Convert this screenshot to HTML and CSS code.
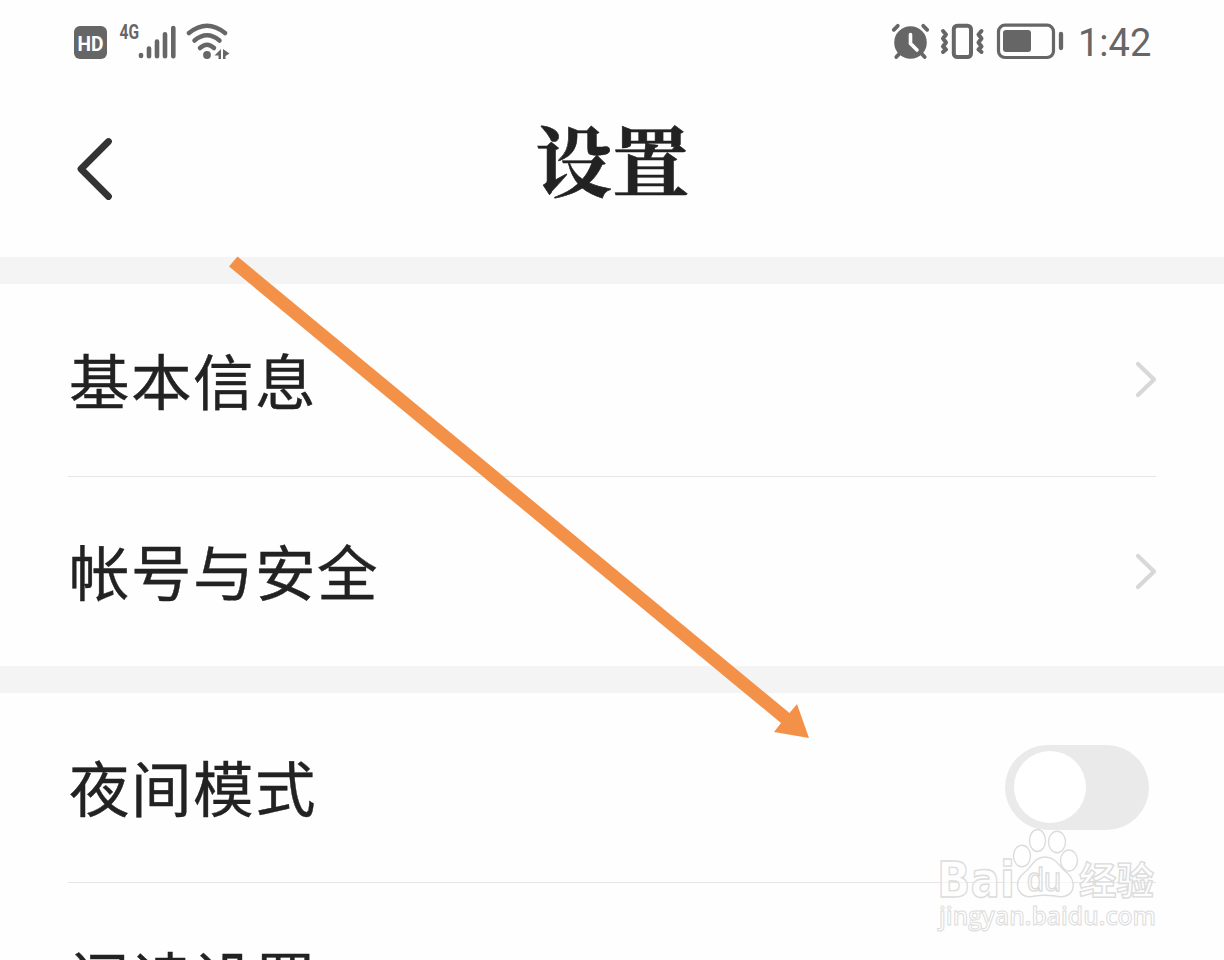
FILE: index.html
```html
<!DOCTYPE html>
<html lang="zh-CN">
<head>
    <meta charset="UTF-8">
    <meta name="viewport" content="width=device-width, initial-scale=1.0">
    <title>设置</title>
    <link rel="stylesheet" href="styles.css">
</head>
<body>
    <div class="screen">
        <!-- Status bar -->
        <div class="status-bar">
            <svg class="status-left" width="160" height="44" viewBox="0 0 160 44">
                <rect x="4" y="6" width="33" height="33" rx="6" fill="#666"/>
                <text class="hd" x="20.5" y="31" textLength="26" lengthAdjust="spacingAndGlyphs">HD</text>
                <text class="net" x="49.5" y="19" textLength="19.5" lengthAdjust="spacingAndGlyphs">4G</text>
                <g stroke="#666" stroke-width="4.6" stroke-linecap="round">
                    <path d="M71 35v1M79 28.5v7.7M87 21.5v14.7M95 14.3v21.9M103.3 8v28.2"/>
                </g>
                <g fill="none" stroke="#666" stroke-width="4.5" stroke-linecap="round">
                    <path d="M119 13q18-14.500 36 0"/>
                    <path d="M124.5 20.5q12.500-10.500 25 0"/>
                    <path d="M130 28q7-6.500 14 0"/>
                </g>
                <circle cx="137" cy="35" r="3.900" fill="#666"/>
                <path d="M151 29v10h-2.500v-3.500h-4zM153 29v10h2.500v-3l4-2.500z" fill="#666"/>
            </svg>
            <div class="status-right">
                <svg width="176" height="44" viewBox="0 0 176 44">
                    <circle cx="20.500" cy="22.500" r="16.300" fill="#666"/>
                    <path d="M3.800 9.800l4-4M37.200 9.800l-4-4M10 33l-3.700 4M31 33l3.700 4" stroke="#666" stroke-width="3.800" stroke-linecap="round"/>
                    <path d="M20.500 14.500v9l6.500 6.500" fill="none" stroke="#fff" stroke-width="3.600" stroke-linecap="round"/>
                    <rect x="63.800" y="5.700" width="17.200" height="31.300" rx="3.500" fill="none" stroke="#666" stroke-width="4"/>
                    <path d="M53 11l3 3.500-3 4 3 4-3 4 3 3-3 2.500M91.500 11l-3 3.500 3 4-3 4 3 4-3 3 3 2.500" fill="none" stroke="#666" stroke-width="4" stroke-linecap="round" stroke-linejoin="round"/>
                    <rect x="108.500" y="5.200" width="55" height="32.300" rx="6.500" fill="none" stroke="#666" stroke-width="3.200"/>
                    <rect x="113" y="10" width="28" height="22" rx="3" fill="#666"/>
                    <path d="M171 14v14" stroke="#666" stroke-width="4.300" stroke-linecap="round"/>
                </svg>
                <span class="time">1:42</span>
            </div>
        </div>

        <!-- Header -->
        <div class="header">
            <svg class="back" width="44" height="70" viewBox="0 0 44 70">
                <path d="M38.500 7.500L11 35l27.500 27.500" fill="none" stroke="#333" stroke-width="6.800" stroke-linecap="round" stroke-linejoin="round"/>
            </svg>
            <h1>设置</h1>
        </div>

        <div class="group">
            <div class="row first">
                <span>基本信息</span>
                <svg class="chevron" width="24" height="40" viewBox="0 0 24 40">
                    <path d="M6 4L22 19.500 6 35" fill="none" stroke="#d8d8d8" stroke-width="4.200" stroke-linecap="round"/>
                </svg>
            </div>
            <div class="row">
                <span>帐号与安全</span>
                <svg class="chevron" width="24" height="40" viewBox="0 0 24 40">
                    <path d="M6 4L22 19.500 6 35" fill="none" stroke="#d8d8d8" stroke-width="4.200" stroke-linecap="round"/>
                </svg>
            </div>
        </div>

        <div class="group">
            <div class="row night">
                <span>夜间模式</span>
                <div class="switch"><div class="knob"></div></div>
            </div>
            <div class="row reading">
                <span>阅读设置</span>
            </div>
        </div>

        <!-- Arrow pointing at the switch -->
        <svg class="arrow" width="1224" height="960" viewBox="0 0 1224 960">
            <path d="M237.500 256.500L789.500 713 797 704 809 738 774 732 781 723 229 266.500z" fill="#f49149"/>
        </svg>

        <!-- Watermark -->
        <svg class="watermark" width="240" height="120" viewBox="0 0 240 120">
            <text class="logo" x="7" y="77" textLength="78" lengthAdjust="spacingAndGlyphs">Bai</text>
            <ellipse cx="92" cy="36" rx="8.500" ry="10.800"/>
            <ellipse cx="107.500" cy="20.500" rx="8" ry="11"/>
            <ellipse cx="127" cy="22" rx="8.500" ry="10.800"/>
            <ellipse cx="139" cy="40.500" rx="8.500" ry="10.500"/>
            <path d="M115 37c-11 0-13 10-20 15-5 4-9 9-7 16 2 8 10 10 17 8 7-1 13-1 20 0 8 2 16 0 18-8 1-7-2-12-7-16-7-5-10-15-21-15z"/>
            <text class="du" x="97" y="71" textLength="34" lengthAdjust="spacingAndGlyphs">du</text>
            <text class="cn" x="149" y="74" textLength="75" lengthAdjust="spacingAndGlyphs">经验</text>
            <text class="url" x="9" y="105" textLength="217" lengthAdjust="spacingAndGlyphs">jingyan.baidu.com</text>
        </svg>
    </div>
</body>
</html>
```
FILE: styles.css
```css
* {
    box-sizing: border-box;
}
body {
    margin: 0;
    background-color: #fefefe;
    color: #222;
    font-family: "Noto Sans CJK SC", sans-serif;
}
.screen {
    position: relative;
    width: 1224px;
    height: 960px;
    overflow: hidden;
}
.status-bar {
    display: flex;
    justify-content: space-between;
    height: 84px;
    padding: 20px 74px 0 70px;
}
.hd {
    font: bold 21px Roboto, sans-serif;
    fill: #fff;
    text-anchor: middle;
}
.net {
    font: bold 21px Roboto, sans-serif;
    fill: #666;
}
.status-right {
    display: flex;
}
.time {
    width: 72px;
    margin-left: 12px;
    font-family: Roboto, sans-serif;
    font-size: 38px;
    line-height: 46px;
    color: #666;
    white-space: nowrap;
}
.header {
    display: grid;
    grid-template-columns: 150px 1fr 150px;
    height: 173px;
}
.back {
    margin: 50px 0 0 70px;
}
h1 {
    margin: 16px 0 0;
    font-family: "Noto Serif CJK SC", "Noto Sans CJK SC", serif;
    font-size: 77px;
    font-weight: 700;
    line-height: 116px;
    text-align: center;
    -webkit-text-stroke: 0.6px #222;
}
.group {
    border-top: 27px solid #f4f4f4;
    padding: 0 68px;
}
.row {
    display: flex;
    align-items: center;
    justify-content: space-between;
    height: 189px;
    font-size: 60.5px;
    letter-spacing: 1.5px;
    line-height: 90px;
}
.row span {
    padding: 0 0 3px 1px;
    -webkit-text-stroke: 0.4px #222;
}
.row.first {
    height: 193px;
    border-bottom: 1px solid #e6e6e6;
}
.row.night {
    height: 190px;
    border-bottom: 1px solid #e6e6e6;
}
.row.reading {
    height: 190px;
}
.switch {
    width: 144px;
    height: 85px;
    margin-right: 7px;
    padding: 6px 9px;
    border-radius: 43px;
    background-color: #eaeaea;
}
.knob {
    width: 72px;
    height: 72px;
    border-radius: 50%;
    background-color: #fff;
}
.arrow {
    position: absolute;
    top: 0;
    left: 0;
}
.watermark {
    position: absolute;
    top: 820px;
    left: 930px;
    fill: rgba(255, 255, 255, 0.6);
    stroke: #dcdcdc;
    stroke-width: 1.4px;
}
.logo {
    font: bold 50px "DejaVu Sans", sans-serif;
}
.du {
    font: 33px "Liberation Sans", sans-serif;
}
.cn {
    font: bold 38px "Noto Sans CJK SC", sans-serif;
}
.url {
    font: 600 25px "Open Sans", sans-serif;
    stroke-width: 1px;
}
```
